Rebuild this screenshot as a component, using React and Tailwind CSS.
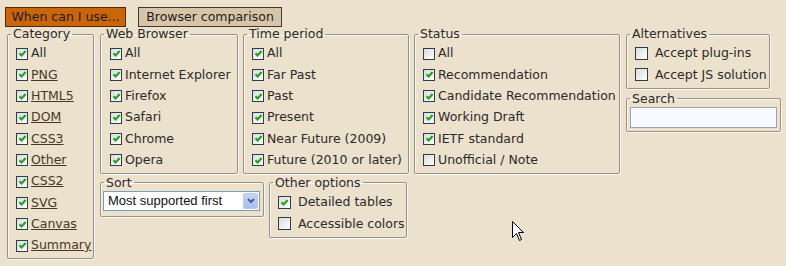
import React from "react";

const font = "font-['DejaVu_Sans',Verdana,sans-serif]";

const Check = ({ checked, big }) => (
  <span
    className={`flex-none flex items-center justify-center border border-[#2b3d4d] bg-gradient-to-br from-[#d9dcd8] to-[#ffffff] ${
      big ? "w-[13px] h-[13px]" : "w-[12px] h-[12px]"
    }`}
  >
    {checked && (
      <svg width="9" height="9" viewBox="0 0 9 9">
        <path d="M1.5 4.2 L3.6 6.4 L7.6 2" fill="none" stroke="#21a121" strokeWidth="2.2" />
      </svg>
    )}
  </span>
);

const Row = ({ label, checked = true, link }) => (
  <div className="flex items-center h-[21.33px]">
    <Check checked={checked} />
    <span className={`ml-[3px] whitespace-nowrap ${link ? "underline text-[#47391f]" : ""}`}>{label}</span>
  </div>
);

const Row2 = ({ label, checked }) => (
  <div className="flex items-center h-[21.33px]">
    <Check checked={checked} big />
    <span className="ml-[7px] whitespace-nowrap">{label}</span>
  </div>
);

const Box = ({ title, className, pad, children }) => (
  <fieldset className={`border border-[#979188] rounded-[2px] shadow-[inset_1px_1px_0_#fbf6ee,1px_1px_0_#fbf6ee] ${className}`}>
    <legend className="ml-[3px] px-[2px] leading-[14px]">{title}</legend>
    <div className={pad}>{children}</div>
  </fieldset>
);

export default function App() {
  return (
    <div className={`relative w-[786px] h-[266px] overflow-hidden bg-[#ece1cd] text-[#2a2a2a] text-[12.5px] ${font}`}>
      <div className="flex pl-[5px] pt-[7px] text-[12.5px]">
        <div className="w-[121px] h-[20px] flex items-center justify-center bg-[#cb6509] border border-[#4d2a05] text-[#1c1c1c]">
          When can I use...
        </div>
        <div className="ml-[12px] w-[144px] h-[20px] flex items-center justify-center bg-[#d7c5a8] border border-[#40392f] text-[#1c1c1c]">
          Browser comparison
        </div>
      </div>

      <div className="flex items-start pl-[7px]">
        <Box title="Category" className="w-[87px]" pad="pl-[8px] pt-[2px] pb-[2px]">
          {["All", "PNG", "HTML5", "DOM", "CSS3", "Other", "CSS2", "SVG", "Canvas", "Summary"].map((c, i) => (
            <Row key={c} label={c} link={i > 0} />
          ))}
        </Box>

        <div className="ml-[6px]">
          <div className="flex items-start">
            <Box title="Web Browser" className="w-[138px]" pad="pl-[9px] pt-[2px] pb-[2px]">
              {["All", "Internet Explorer", "Firefox", "Safari", "Chrome", "Opera"].map((b) => (
                <Row key={b} label={b} />
              ))}
            </Box>
            <Box title="Time period" className="ml-[5px] w-[166px]" pad="pl-[8px] pt-[2px] pb-[2px]">
              {["All", "Far Past", "Past", "Present", "Near Future (2009)", "Future (2010 or later)"].map((t) => (
                <Row key={t} label={t} />
              ))}
            </Box>
            <Box title="Status" className="ml-[5px] w-[206px]" pad="pl-[8px] pt-[2px] pb-[2px]">
              <Row label="All" checked={false} />
              <Row label="Recommendation" />
              <Row label="Candidate Recommendation" />
              <Row label="Working Draft" />
              <Row label="IETF standard" />
              <Row label="Unofficial / Note" checked={false} />
            </Box>
            <div className="ml-[6px]">
              <Box title="Alternatives" className="w-[144px]" pad="pl-[8px] pt-[2px] pb-[2px]">
                <Row2 label="Accept plug-ins" />
                <Row2 label="Accept JS solution" />
              </Box>
              <Box title="Search" className="mt-[3px] w-[155px]" pad="pl-[3px] pb-[3px]">
                <div className="mt-[1px] w-[147px] h-[21px] bg-[#f7fbff] border border-[#9ea5a8]" />
              </Box>
            </div>
          </div>

          <div className="flex items-start mt-[2px]">
            <Box title="Sort" className="w-[164px]" pad="pl-[2px] pb-[5px]">
              <div className="mt-[1px] w-[157px] h-[20px] flex items-center justify-between bg-white border border-[#7f9db9] font-['Liberation_Sans',Arial,sans-serif] text-[13px] text-[#111]">
                <span className="pl-[4px]">Most supported first</span>
                <span className="mr-[1px] w-[15px] h-[16px] flex items-center justify-center rounded-[2px] bg-gradient-to-b from-[#c6d3f7] to-[#a9bfef] border border-[#b9c8ef]">
                  <svg width="8" height="6" viewBox="0 0 8 6">
                    <path d="M1 1 L4 4 L7 1" fill="none" stroke="#4d6185" strokeWidth="2" />
                  </svg>
                </span>
              </div>
            </Box>
            <Box title="Other options" className="ml-[5px] w-[138px]" pad="pl-[8px] pt-[2px] pb-[2px]">
              <Row2 label="Detailed tables" checked />
              <Row2 label="Accessible colors" />
            </Box>
          </div>
        </div>
      </div>

      <svg className="absolute left-[512px] top-[221px]" width="13" height="21" viewBox="0 0 13 21">
        <path d="M0.5 0.5 L0.5 16.5 L4.5 12.5 L7.5 19.5 L9.5 18.5 L6.5 11.5 L11.5 11.5 Z" fill="#fff" stroke="#000" strokeWidth="1" />
      </svg>
    </div>
  );
}
